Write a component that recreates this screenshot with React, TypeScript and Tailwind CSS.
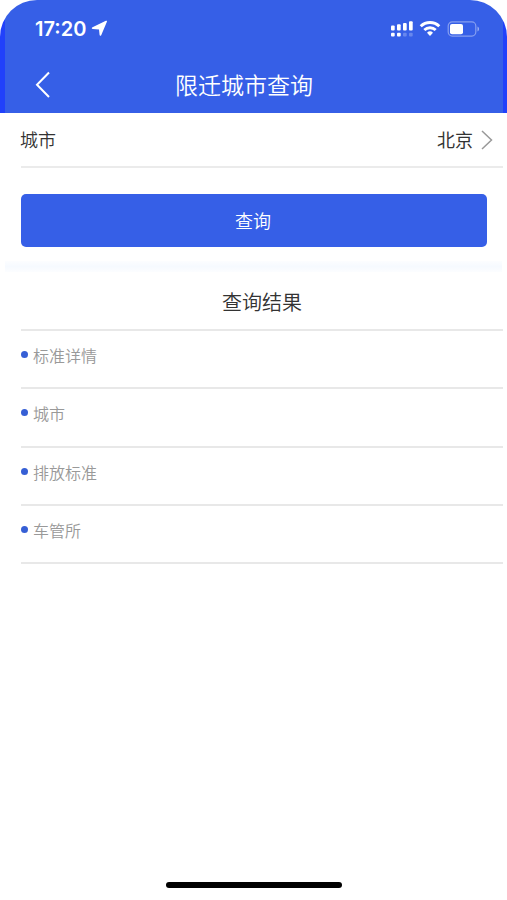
const details = ['标准详情', '城市', '排放标准', '车管所'];

function StatusBar() {
  return (
    <div className="flex h-[57px] items-center justify-between pr-[27px] pl-[35px]">
      <div className="flex items-center gap-[5px]">
        <span className="font-[Inter,sans-serif] text-[20px] leading-[24px] font-semibold">17:20</span>
        <svg width="17" height="17" viewBox="0 0 17 17" fill="currentColor">
          <path d="M15.900 1.700 10.200 15.200c-.4.900-1.500.8-1.600-.2L8 9.500 1.800 8.900C.5 8.800.4 7.700 1.500 7.200L14.900.8c.8-.4 1.300.1 1 .9Z" />
        </svg>
      </div>
      <svg width="90" height="18" viewBox="0 0 90 18" fill="none">
        <g fill="#fff">
          <rect x="1" y="5.500" width="3.700" height="5" rx="1" />
          <rect x="7" y="4.300" width="3.700" height="6.200" rx="1" />
          <rect x="13" y="3" width="3.700" height="7.500" rx="1" />
          <rect x="19" y="1.300" width="3.700" height="9.200" rx="1" />
          <rect x="1" y="12.700" width="3.700" height="3.800" rx="1" />
          <rect x="7" y="12.700" width="3.700" height="3.800" rx="1" />
          <rect x="13" y="12.700" width="3.700" height="3.800" rx="1" opacity=".25" />
          <rect x="19" y="12.700" width="3.700" height="3.800" rx="1" opacity=".25" />
        </g>
        <g stroke="#fff" strokeWidth="2.900">
          <path d="M30.700 6.300a13.400 13.400 0 0 1 18.600 0" />
          <path d="M34.300 10a8.300 8.300 0 0 1 11.400 0" />
        </g>
        <path d="M37 12.700a4.500 4.500 0 0 1 6 0l-3 3.300Z" fill="#fff" />
        <rect x="58.200" y="1.900" width="27.600" height="14.200" rx="4" stroke="#fff" strokeOpacity=".4" strokeWidth="1.200" />
        <rect x="60" y="4" width="13" height="10.300" rx="2" fill="#fff" />
        <path d="M87.500 6.500c2 .7 2 4.300 0 5Z" fill="#fff" opacity=".5" />
      </svg>
    </div>
  );
}

export default function App() {
  return (
    <div className="flex h-[900px] w-[507px] flex-col overflow-hidden bg-white font-['Noto_Sans_CJK_SC',sans-serif] text-[#333]">
      <header className="h-[113px] shrink-0 rounded-t-[37px] bg-[linear-gradient(to_right,#2141fb_5px,#365fe7_5px,#365fe7_503px,#2141fb_503px)] text-white">
        <StatusBar />
        <div className="grid h-[54px] grid-cols-[60px_1fr_79px] items-center">
          <svg className="ml-[35px]" width="16" height="28" viewBox="0 0 16 28" fill="none" stroke="currentColor" strokeWidth="2">
            <path d="M14 2.500 2 14.800 14 27" />
          </svg>
          <h1 className="text-center text-[23px] leading-[34px] font-[350]">限迁城市查询</h1>
        </div>
      </header>

      <div className="mr-[4px] ml-[21px] flex h-[55px] shrink-0 items-center justify-between border-b-2 border-[#ebebeb] pr-[10px] text-[18px]">
        <span className="-ml-px font-[350]">城市</span>
        <span className="flex items-center gap-[8px]">
          北京
          <svg width="12" height="20" viewBox="0 0 12 20" fill="none" stroke="#999" strokeWidth="1.500">
            <path d="m1 1 9.500 9L1 19" />
          </svg>
        </span>
      </div>

      <button className="mt-[26px] mr-[20px] ml-[21px] h-[53px] shrink-0 rounded-[5px] bg-[#365fe7] pr-[2px] text-[18px] font-[350] text-white">查询</button>

      <div className="mx-[5px] mt-[14px] h-[11px] shrink-0 bg-linear-to-b from-[#fcfdff] via-[#f6faff] to-[#fcfdff]" />

      <section className="mr-[4px] ml-[21px]">
        <h2 className="h-[59px] border-b-2 border-[#e8e8e8] pt-[15px] text-center text-[20px] leading-[29px] font-[350]">
          查询结果
        </h2>
        <ul>
          {details.map((label) => (
            <li key={label} className="flex h-[58.300px] items-start border-b-2 border-[#e8e8e8] pt-[12px] text-[16px] leading-[24px] font-[350] text-[#999]">
              <span className="mt-[8px] mr-[5px] size-[7px] rounded-full bg-[#365fd5]" />
              {label}
            </li>
          ))}
        </ul>
      </section>

      <div className="mx-auto mt-auto mb-[12px] h-[6px] w-[176px] shrink-0 rounded-full bg-black" />
    </div>
  );
}
